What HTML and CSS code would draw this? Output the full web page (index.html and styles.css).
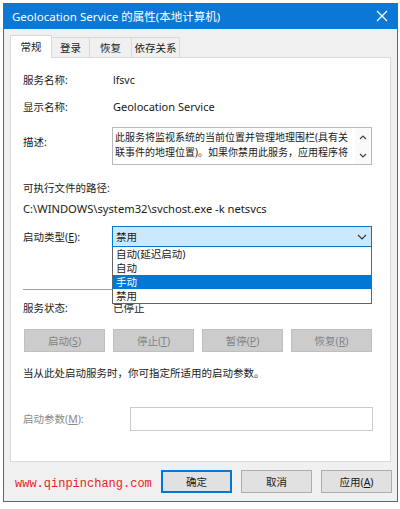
FILE: index.html
```html
<!DOCTYPE html>
<html lang="zh-CN">

<head>
    <meta charset="UTF-8">
    <meta name="viewport" content="width=device-width, initial-scale=1.0">
    <title>Geolocation Service 的属性</title>
    <link rel="stylesheet" href="styles.css">
</head>

<body>
    <div class="window">
        <div class="title-bar">
            <span class="title">Geolocation Service 的属性(本地计算机)</span>
            <svg class="close" width="12" height="12" viewBox="0 0 12 12">
                <path d="M1 1 L11 11 M11 1 L1 11" stroke="#fff" stroke-width="1.3" fill="none" />
            </svg>
        </div>

        <div class="dialog-body">
            <div class="tabs">
                <div class="tab active">常规</div>
                <div class="tab tab-login">登录</div>
                <div class="tab tab-recover">恢复</div>
                <div class="tab tab-deps">依存关系</div>
            </div>

            <div class="panel">
                <div class="row row-name">
                    <span class="label">服务名称:</span>
                    <span class="value">lfsvc</span>
                </div>
                <div class="row row-display">
                    <span class="label">显示名称:</span>
                    <span class="value">Geolocation Service</span>
                </div>
                <div class="row row-desc">
                    <span class="label desc-label">描述:</span>
                    <div class="desc-box">
                        <div class="desc-text">此服务将监视系统的当前位置并管理地理围栏(具有关<br>联事件的地理位置)。如果你禁用此服务，应用程序将</div>
                        <div class="desc-scroll">
                            <svg width="8" height="6" viewBox="0 0 8 6">
                                <path d="M1 5 L4 2 L7 5" stroke="#444" stroke-width="1.2" fill="none" />
                            </svg>
                            <svg width="8" height="6" viewBox="0 0 8 6">
                                <path d="M1 1 L4 4 L7 1" stroke="#444" stroke-width="1.2" fill="none" />
                            </svg>
                        </div>
                    </div>
                </div>

                <div class="path-label">可执行文件的路径:</div>
                <div class="path-value">C:\WINDOWS\system32\svchost.exe -k netsvcs</div>

                <div class="row row-startup">
                    <span class="label">启动类型(<u>E</u>):</span>
                    <div class="select-wrap">
                        <div class="select">
                            <span>禁用</span>
                            <svg width="10" height="6" viewBox="0 0 10 6">
                                <path d="M1 1 L5 5 L9 1" stroke="#333" stroke-width="1.1" fill="none" />
                            </svg>
                        </div>
                        <ul class="dropdown">
                            <li>自动(延迟启动)</li>
                            <li>自动</li>
                            <li class="selected">手动</li>
                            <li>禁用</li>
                        </ul>
                    </div>
                </div>

                <div class="separator"></div>

                <div class="row row-status">
                    <span class="label">服务状态:</span>
                    <span class="value">已停止</span>
                </div>

                <div class="service-buttons">
                    <button class="btn-disabled">启动(<u>S</u>)</button>
                    <button class="btn-disabled">停止(<u>T</u>)</button>
                    <button class="btn-disabled">暂停(<u>P</u>)</button>
                    <button class="btn-disabled">恢复(<u>R</u>)</button>
                </div>

                <div class="hint">当从此处启动服务时，你可指定所适用的启动参数。</div>

                <div class="row row-params">
                    <span class="label label-disabled">启动参数(<u>M</u>):</span>
                    <div class="params-input"></div>
                </div>
            </div>

            <div class="footer">
                <span class="watermark">www.qinpinchang.com</span>
                <div class="footer-buttons">
                    <button class="btn default">确定</button>
                    <button class="btn">取消</button>
                    <button class="btn">应用(<u>A</u>)</button>
                </div>
            </div>
        </div>
    </div>
</body>

</html>
```

FILE: styles.css
```css
body {
    margin: 0;
    padding: 0;
    background-color: #fff;
    font-family: 'Noto Sans', 'Noto Sans CJK SC', sans-serif;
    font-size: 10.5px;
    color: #1a1a1a;
}

.window {
    margin: 3px 0 0 3px;
    width: 393px;
    height: 498px;
    border: 1px solid #5b6670;
    border-top: none;
    background-color: #f0f0f0;
}

.title-bar {
    height: 26px;
    background-color: #0a78d4;
    display: flex;
    align-items: center;
    justify-content: space-between;
    padding: 0 9px 0 8px;
    color: #fff;
}

.title {
    font-size: 11.5px;
}

.dialog-body {
    padding: 6px 6px 0 6px;
}

.tabs {
    display: flex;
    align-items: flex-end;
    height: 22px;
}

.tab {
    height: 20px;
    line-height: 20px;
    text-align: center;
    border: 1px solid #d9d9d9;
    border-bottom: none;
    border-left: none;
    background-color: #f0f0f0;
    box-sizing: border-box;
}

.tab.active {
    width: 42px;
    height: 23px;
    line-height: 22px;
    border-left: 1px solid #d9d9d9;
    background-color: #fff;
    margin-bottom: -1px;
    position: relative;
    z-index: 1;
}

.tab-login {
    width: 38px;
}

.tab-recover {
    width: 42px;
}

.tab-deps {
    width: 48px;
}

.panel {
    position: relative;
    height: 403px;
    border: 1px solid #d9d9d9;
    background-color: #fff;
    padding: 0 18px 0 12px;
}

.row {
    display: flex;
    align-items: center;
    height: 16px;
    line-height: 16px;
}

.label {
    width: 89px;
    flex-shrink: 0;
}

.value {
    padding-left: 1px;
}

.row-display .value {
    font-size: 11px;
}

.row-name {
    margin-top: 14px;
}

.row-display {
    margin-top: 11px;
}

.row-desc {
    margin-top: 12px;
    height: 38px;
    align-items: flex-start;
}

.desc-label {
    padding-top: 7px;
}

.desc-box {
    flex: 1;
    height: 38px;
    box-sizing: border-box;
    border: 1px solid #b9b9b9;
    display: flex;
    justify-content: space-between;
}

.desc-text {
    padding: 2px 0 0 2px;
    font-size: 10px;
    line-height: 15px;
    white-space: nowrap;
}

.desc-scroll {
    width: 16px;
    display: flex;
    flex-direction: column;
    justify-content: space-between;
    align-items: center;
    padding: 6px 0 5px 0;
    background-color: #fafafa;
}

.path-label {
    margin-top: 15px;
    line-height: 16px;
}

.path-value {
    margin-top: 5px;
    line-height: 16px;
    font-size: 11.2px;
}

.row-startup {
    margin-top: 9px;
    height: 21px;
}

.select-wrap {
    flex: 1;
    position: relative;
}

.select {
    height: 21px;
    box-sizing: border-box;
    border: 1px solid #0078d7;
    background-color: #cce8ff;
    display: flex;
    align-items: center;
    justify-content: space-between;
    padding: 0 4px 0 3px;
}

.dropdown {
    position: absolute;
    top: 21px;
    left: 0;
    right: 0;
    margin: 0;
    padding: 0;
    list-style: none;
    border: 1px solid #646464;
    border-top: none;
    background-color: #fff;
    z-index: 2;
}

.dropdown li {
    height: 14px;
    line-height: 14px;
    padding-left: 3px;
}

.dropdown li.selected {
    background-color: #0078d7;
    color: #fff;
}

.separator {
    margin-top: 42px;
    height: 1px;
    background-color: #a0a0a0;
}

.row-status {
    margin-top: 10px;
}

.service-buttons {
    margin-top: 13px;
    display: grid;
    grid-template-columns: repeat(4, 1fr);
    gap: 8px;
    padding-left: 1px;
}

button {
    font-family: inherit;
    font-size: 10.5px;
    height: 23px;
    padding: 0;
    border-radius: 0;
    cursor: pointer;
}

.btn-disabled {
    background-color: #cccccc;
    border: 1px solid #bfbfbf;
    color: #838383;
}

.hint {
    margin-top: 13px;
    line-height: 16px;
}

.row-params {
    margin-top: 26px;
    height: 24px;
}

.label-disabled {
    width: 107px;
    color: #8a8a8a;
}

.params-input {
    flex: 1;
    height: 24px;
    box-sizing: border-box;
    border: 1px solid #cccccc;
    margin-right: -1px;
}

.footer {
    margin-top: 8px;
    display: flex;
    align-items: center;
    justify-content: space-between;
    padding-left: 5px;
    margin-right: -1px;
}

.watermark {
    font-family: 'Liberation Mono', monospace;
    font-size: 12px;
    color: #ee1c24;
    padding-top: 5px;
}

.footer-buttons {
    display: flex;
    gap: 9px;
}

.btn {
    width: 71px;
    background-color: #e1e1e1;
    border: 1px solid #adadad;
    color: #1a1a1a;
}

.btn.default {
    border: 2px solid #0078d7;
}
```
